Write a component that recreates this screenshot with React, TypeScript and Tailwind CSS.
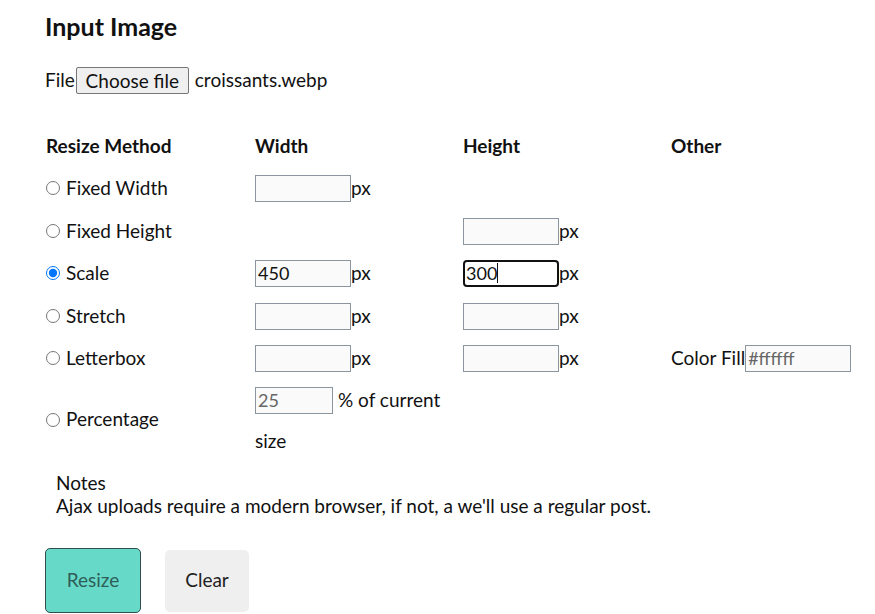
import React from 'react';

const font = { fontFamily: 'Lato, "Noto Sans", sans-serif' };

function Px({ value, focused }: { value?: string; focused?: boolean }) {
  return (
    <div className="flex items-center">
      <div className="relative">
        <input
          readOnly
          value={value ?? ''}
          className={
            focused
              ? 'w-[96px] h-[27px] border-2 border-[#111] rounded-[4px] bg-white px-[1px] text-[18px] text-[#111] outline-none'
              : 'w-[96px] h-[27px] border border-[#8a959f] bg-[#fafafa] px-[2px] text-[18px] text-[#111] outline-none'
          }
        />
        {focused && <span className="absolute left-[34px] top-[4px] w-px h-[20px] bg-[#111]" />}
      </div>
      <span>px</span>
    </div>
  );
}

function Radio({ label, checked }: { label: string; checked?: boolean }) {
  return (
    <label className="flex items-center gap-[6px]">
      <input type="radio" name="method" defaultChecked={checked} className="w-[14px] h-[14px] m-0" />
      <span>{label}</span>
    </label>
  );
}

const rows = [
  { label: 'Fixed Width', width: true, height: false },
  { label: 'Fixed Height', width: false, height: true },
  { label: 'Scale', width: true, height: true, checked: true, wv: '450', hv: '300', focus: true },
  { label: 'Stretch', width: true, height: true },
  { label: 'Letterbox', width: true, height: true, other: true },
];

export default function App() {
  return (
    <div className="min-h-screen bg-white text-[#111] text-[19px] pl-[45px]" style={font}>
      <h1 className="pt-[10px] h-[46px] text-[25px] font-bold leading-[32px]" style={{ fontFamily: 'Lato, sans-serif' }}>
        Input Image
      </h1>

      <div className="mt-[20px] flex items-center h-[28px]">
        <span>File</span>
        <button className="ml-[1px] h-[27px] w-[113px] border border-[#767676] rounded-[2px] bg-[#efefef] text-[19px] leading-none">
          Choose file
        </button>
        <span className="ml-[6px]">croissants.webp</span>
      </div>

      <div className="mt-[31px] ml-[1px]">
        <div className="grid grid-cols-[209px_208px_208px_auto] h-[42px] items-center font-bold">
          <div>Resize Method</div>
          <div>Width</div>
          <div>Height</div>
          <div>Other</div>
        </div>
        {rows.map((r) => (
          <div key={r.label} className="grid grid-cols-[209px_208px_208px_auto] h-[42.5px] items-center">
            <Radio label={r.label} checked={r.checked} />
            <div>{r.width && <Px value={r.wv} />}</div>
            <div>{r.height && <Px value={r.hv} focused={r.focus} />}</div>
            <div>
              {r.other && (
                <div className="flex items-center">
                  <span>Color Fill</span>
                  <input
                    readOnly
                    value="#ffffff"
                    className="w-[106px] h-[27px] border border-[#8a959f] bg-[#fafafa] px-[2px] text-[18px] text-[#666] outline-none"
                  />
                </div>
              )}
            </div>
          </div>
        ))}
        <div className="grid grid-cols-[209px_208px_208px_auto] h-[80px] items-center">
          <Radio label="Percentage" />
          <div className="self-start pt-[7px]">
            <div className="flex items-center h-[27px]">
              <input
                readOnly
                value="25"
                className="w-[78px] h-[27px] border border-[#8a959f] bg-[#fafafa] px-[2px] text-[18px] text-[#666] outline-none"
              />
              <span className="ml-[5px]">% of current</span>
            </div>
            <div className="mt-[15px] leading-[24px]">size</div>
          </div>
          <div />
          <div />
        </div>
      </div>

      <div className="ml-[11px] mt-[11px] leading-[23px]">
        <div>Notes</div>
        <div>Ajax uploads require a modern browser, if not, a we'll use a regular post.</div>
      </div>

      <div className="mt-[31px] flex items-start gap-[24px]">
        <button className="w-[96px] h-[65px] bg-[#66d9c8] border border-[#2f4f4c] rounded-[5px] text-[#2f5e59] text-[19px]">
          Resize
        </button>
        <button className="mt-[2px] w-[84px] h-[62px] bg-[#efefef] rounded-[5px] text-[#222] text-[19px]">
          Clear
        </button>
      </div>
    </div>
  );
}
